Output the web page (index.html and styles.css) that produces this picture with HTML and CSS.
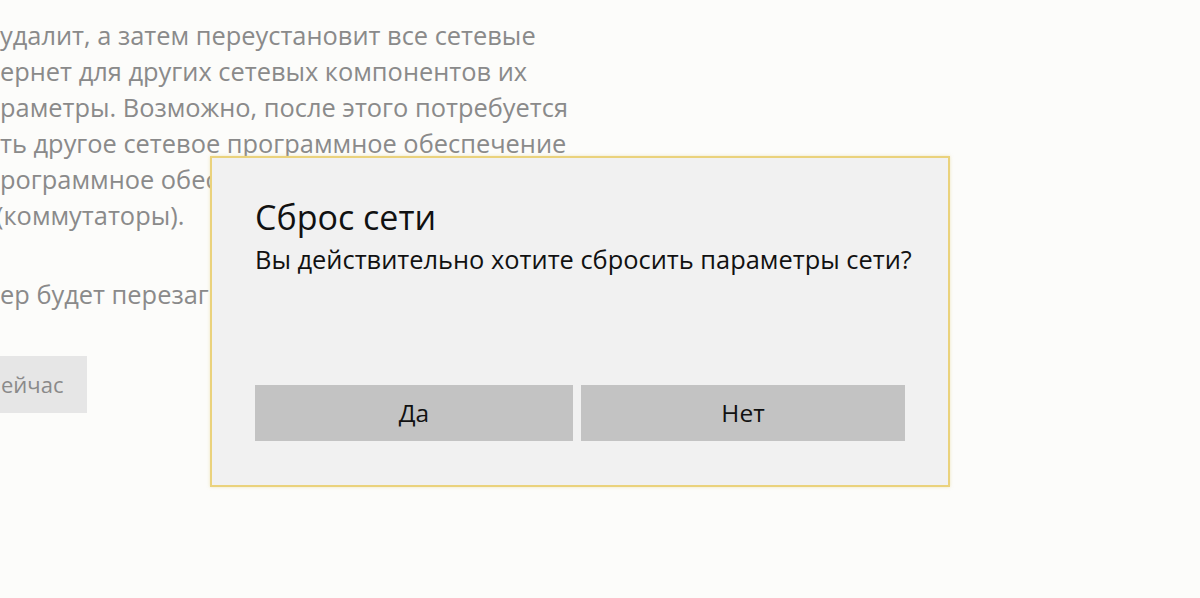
FILE: index.html
```html
<!DOCTYPE html>
<html lang="ru">
<head>
<meta charset="utf-8">
<link rel="stylesheet" href="styles.css">
</head>
<body>
<div class="page">
  <div class="para">
    <div class="line">удалит, а затем переустановит все сетевые</div>
    <div class="line">ернет для других сетевых компонентов их</div>
    <div class="line">раметры. Возможно, после этого потребуется</div>
    <div class="line">ть другое сетевое программное обеспечение</div>
    <div class="line">рограммное обеспечение VPN или виртуальные</div>
    <div class="line shifted">(коммутаторы).</div>
  </div>
  <div class="para second">
    <div class="line">ер будет перезагружен.</div>
  </div>
  <div class="reset-btn">ейчас</div>
</div>

<div class="dialog">
  <div class="dlg-title">Сброс сети</div>
  <div class="dlg-msg">Вы действительно хотите сбросить параметры сети?</div>
  <div class="dlg-buttons">
    <div class="btn yes">Да</div>
    <div class="btn no">Нет</div>
  </div>
</div>
</body>
</html>
```

FILE: styles.css
```css
html, body {
  margin: 0;
  padding: 0;
  width: 1200px;
  height: 598px;
  overflow: hidden;
  background: #fcfcfa;
  font-family: "Open Sans", "Noto Sans", sans-serif;
}
.page {
  padding-top: 17px;
}
.para {
  color: #8a8a8a;
  font-size: 25.4px;
  line-height: 36px;
  white-space: nowrap;
}
.line {
  height: 36px;
}
.shifted {
  text-indent: -4px;
}
.second {
  margin-top: 43px;
}
.reset-btn {
  margin-top: 44px;
  width: 87px;
  height: 57px;
  background: #e6e6e6;
  color: #8a8a8a;
  font-size: 22px;
  line-height: 57px;
  padding-left: 1px;
  box-sizing: border-box;
  white-space: nowrap;
}
.dialog {
  position: absolute;
  left: 210px;
  top: 156px;
  width: 740px;
  height: 331px;
  box-sizing: border-box;
  border: 2px solid #ead27c;
  background: #f1f1f1;
  padding: 39px 43px 44px 43px;
  display: flex;
  flex-direction: column;
  box-shadow: 0 0 3px rgba(230, 210, 130, 0.5);
}
.dlg-title {
  font-size: 34px;
  line-height: 40px;
  color: #111;
}
.dlg-msg {
  margin-top: 6px;
  font-size: 25.4px;
  line-height: 32px;
  color: #111;
  white-space: nowrap;
}
.dlg-buttons {
  margin-top: auto;
  display: flex;
  gap: 8px;
}
.btn {
  height: 56px;
  background: #c3c3c3;
  color: #111;
  font-size: 24.5px;
  line-height: 56px;
  text-align: center;
}
.yes { width: 318px; }
.no { width: 324px; }
```
